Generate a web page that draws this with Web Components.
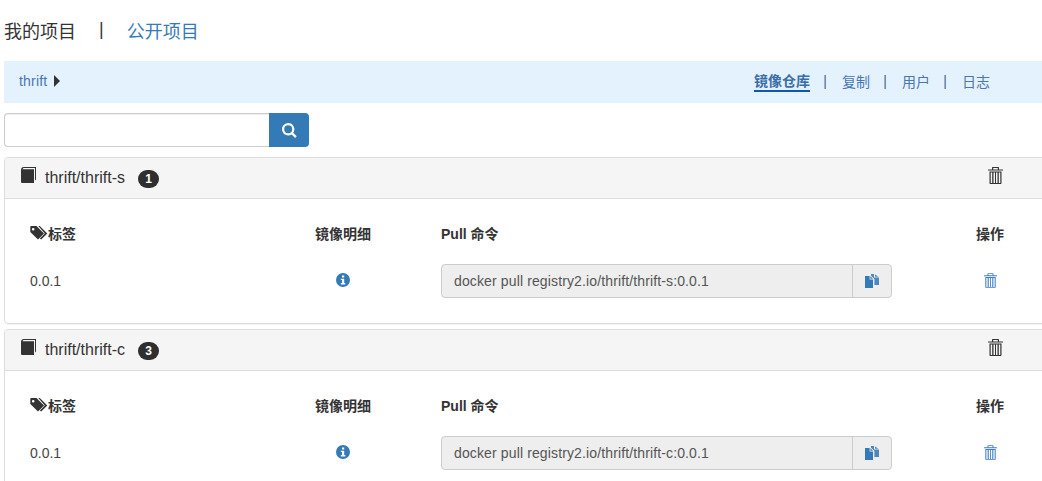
<!DOCTYPE html>
<html>
<head>
<meta charset="utf-8">
<style>
html,body{margin:0;padding:0;overflow:hidden;background:#fff;}
body{width:1042px;height:481px;font-family:"Liberation Sans","Noto Sans CJK SC",sans-serif;font-size:14px;color:#333;}
</style>
</head>
<body>
<project-page>
  <project-tabs></project-tabs>
  <crumb-bar></crumb-bar>
  <search-box></search-box>
  <repo-panel name="thrift/thrift-s" count="1"></repo-panel>
  <repo-panel name="thrift/thrift-c" count="3"></repo-panel>
</project-page>

<script>
// shared icons
var TRASH_PATH = "M5 0h5c.6 0 1 .4 1 1v1.500h3.600c.2 0 .4.2.4.4v.7H0v-.7c0-.2.2-.4.4-.4H4V1c0-.6.4-1 1-1zm.2 1.100v1.400h4.600V1.100H5.200zM1.500 4.500h12V16c0 .6-.4 1-1 1h-10c-.6 0-1-.4-1-1V4.500zm1.200 1.100V15.900h1.500V5.600H2.700zm2.800 0V15.900H7V5.600H5.500zm2.500 0V15.900h1.500V5.600H8zm2.800 0V15.900h1.500V5.600h-1.500z";
var ICONS = {
  book:'<svg width="15" height="16" viewBox="0 0 15 16"><path fill="currentColor" d="M0 3C0 1.300 1.200 0 2.800 0H15v12.500l-1 1V1H3C2.300 1 1.800 1.400 1.500 2.200H13V16H1.500C.6 16 0 15.300 0 14.400z"/></svg>',
  trash:'<svg width="15" height="17" viewBox="0 0 15 17"><path fill="currentColor" fill-rule="evenodd" d="'+TRASH_PATH+'"/></svg>',
  trashSmall:'<svg width="13" height="15" viewBox="0 0 15 17"><path fill="currentColor" fill-rule="evenodd" d="'+TRASH_PATH+'"/></svg>',
  tags:'<svg width="18" height="14" viewBox="0 0 18 14"><path fill="currentColor" fill-rule="evenodd" d="M1 0h5.500L14 7.500 8 13.600.3 6V1C.3.400.5 0 1 0zm2.200 2a1.300 1.300 0 1 0 0 2.600 1.300 1.300 0 0 0 0-2.600z"/><path fill="currentColor" d="M8.300 0h1.500L17.300 7.500 11.200 13.600l-1.300-1.200 4.900-4.900z"/></svg>',
  search:'<svg width="15" height="15" viewBox="0 0 15 15"><path fill="#fff" fill-rule="evenodd" d="M6.200 0a6.200 6.200 0 0 1 5 9.800l3.500 3.500-1.600 1.600-3.500-3.500A6.200 6.200 0 1 1 6.200 0zm0 2.200a4 4 0 1 0 0 8 4 4 0 0 0 0-8z"/></svg>',
  info:'<svg width="14" height="14" viewBox="0 0 14 14"><path fill="currentColor" fill-rule="evenodd" d="M7 0a7 7 0 1 1 0 14A7 7 0 0 1 7 0zM6 2.500v2h2.200v-2H6zM4.800 5.700v1.300h1.200v3H4.800v1.400h4.500V10H8.200V5.700H4.800z"/></svg>',
  copy:'<svg width="14" height="14" viewBox="0 0 14 14"><path fill="#4f86bd" d="M6 0h3v3.400h5V11H9.400V5L6 1.800z"/><path fill="#4f86bd" d="M10 0.400L13.400 2.800H10z"/><path fill="#337ab7" d="M0 2h4.600v3.600H8V14H0z"/><path fill="#337ab7" d="M5.400 2.200L7.800 4.800H5.400z"/></svg>'
};

class ProjectPage extends HTMLElement {
  constructor(){
    super();
    this.attachShadow({mode:"open"});
    this.shadowRoot.innerHTML = `
      <style>
        :host{display:flex;flex-direction:column;padding-left:4px;width:1060px;box-sizing:border-box;}
      </style>
      <slot></slot>`;
  }
}

class ProjectTabs extends HTMLElement {
  constructor(){
    super();
    this.attachShadow({mode:"open"});
    this.shadowRoot.innerHTML = `
      <style>
        :host{display:flex;align-items:center;height:61px;box-sizing:border-box;padding-bottom:2px;font-size:18px;color:#333;}
        .sep{margin:0 23px;}
        a{color:#337ab7;text-decoration:none;}
      </style>
      <span>我的项目</span><span class="sep">|</span><a>公开项目</a>`;
  }
}

class CrumbBar extends HTMLElement {
  constructor(){
    super();
    this.attachShadow({mode:"open"});
    this.shadowRoot.innerHTML = `
      <style>
        :host{display:flex;align-items:center;height:42px;background:#e4f2fd;width:1038px;font-size:14px;box-sizing:border-box;padding:0 0 2px 15px;}
        .crumb{color:#4a76b4;letter-spacing:.2px;}
        .arrow{width:0;height:0;border-left:6px solid #333;border-top:6px solid transparent;border-bottom:6px solid transparent;margin-left:7px;}
        nav{margin-left:auto;display:flex;align-items:center;font-size:14px;color:#4a76b4;padding-right:52px;}
        nav .on{font-weight:bold;color:#3a6ea8;line-height:18px;margin-top:2px;border-bottom:2px solid #0e58b0;}
        nav i{font-style:normal;width:32px;box-sizing:border-box;padding-right:2px;text-align:center;color:#44678c;}
      </style>
      <span class="crumb">thrift</span><span class="arrow"></span>
      <nav><span class="on">镜像仓库</span><i>|</i><span>复制</span><i>|</i><span>用户</span><i>|</i><span>日志</span></nav>`;
  }
}

class SearchBox extends HTMLElement {
  constructor(){
    super();
    this.attachShadow({mode:"open"});
    this.shadowRoot.innerHTML = `
      <style>
        :host{display:flex;width:305px;height:34px;margin:10px 0 10px;}
        input{flex:1;min-width:0;box-sizing:border-box;height:34px;border:1px solid #ccc;border-right:0;border-radius:4px 0 0 4px;padding:0;margin:0;box-shadow:inset 0 1px 1px rgba(0,0,0,.075);outline:0;}
        button{width:40px;height:34px;background:#337ab7;border:0;border-radius:0 4px 4px 0;padding:0;display:flex;align-items:center;justify-content:center;}
      </style>
      <input type="text"><button>${ICONS.search}</button>`;
  }
}

class RepoPanel extends HTMLElement {
  constructor(){
    super();
    this.attachShadow({mode:"open"});
  }
  connectedCallback(){
    var name = this.getAttribute("name"), count = this.getAttribute("count");
    this.shadowRoot.innerHTML = `
      <style>
        :host{display:block;border:1px solid #ddd;border-radius:4px;width:1060px;box-sizing:border-box;margin-bottom:5px;box-shadow:0 1px 1px rgba(0,0,0,.05);}
        header{display:flex;align-items:center;height:40px;background:#f5f5f5;border-bottom:1px solid #ddd;border-radius:3px 3px 0 0;padding-left:16px;color:#333;font-size:16px;position:relative;}
        header .book{display:flex;margin-right:9px;margin-top:-6px;color:#333;}
        .badge{background:#2f2f2f;color:#fff;font-weight:bold;font-size:12px;border-radius:10px;width:21px;height:18px;line-height:18px;text-align:center;margin-left:13px;margin-top:1px;}
        .trash{display:flex;position:absolute;left:983px;top:9px;color:#333;}
        .body{display:grid;grid-template-columns:255px 116px 549px 80px;padding:5px 0 0 25px;height:119px;grid-template-rows:60px 34px;align-items:center;color:#333;font-size:14px;}
        .h{font-weight:bold;margin-top:-2px;}
        .tag{display:flex;align-items:center;}
        .tag span{display:flex;color:#333;margin-top:-1px;}
        .c{text-align:center;}
        .i{display:flex;justify-content:center;color:#337ab7;margin-top:-2px;}
        .p{padding-left:40px;}
        .row{color:#444;}
      </style>
      <header><span class="book">${ICONS.book}</span><span>${name}</span><span class="badge">${count}</span><span class="trash">${ICONS.trash}</span></header>
      <div class="body">
        <div class="h tag"><span>${ICONS.tags}</span>标签</div>
        <div class="h c">镜像明细</div>
        <div class="h p">Pull 命令</div>
        <div class="h c">操作</div>
        <div class="row">0.0.1</div>
        <div class="i">${ICONS.info}</div>
        <div class="p"><pull-field cmd="docker pull registry2.io/${name}:0.0.1"></pull-field></div>
        <div class="i"><span style="color:#4080c4;display:flex">${ICONS.trashSmall}</span></div>
      </div>`;
  }
}

class PullField extends HTMLElement {
  constructor(){
    super();
    this.attachShadow({mode:"open"});
  }
  connectedCallback(){
    this.shadowRoot.innerHTML = `
      <style>
        :host{display:flex;width:451px;height:34px;box-sizing:border-box;border:1px solid #ccc;border-radius:4px;background:#eee;color:#555;font-size:14px;letter-spacing:.13px;}
        .t{flex:1;padding-left:12px;line-height:32px;}
        .b{width:38px;border-left:1px solid #ccc;display:flex;align-items:center;justify-content:center;}
      </style>
      <div class="t">${this.getAttribute("cmd")}</div><div class="b">${ICONS.copy}</div>`;
  }
}

customElements.define("project-page", ProjectPage);
customElements.define("project-tabs", ProjectTabs);
customElements.define("crumb-bar", CrumbBar);
customElements.define("search-box", SearchBox);
customElements.define("repo-panel", RepoPanel);
customElements.define("pull-field", PullField);
</script>
</body>
</html>
